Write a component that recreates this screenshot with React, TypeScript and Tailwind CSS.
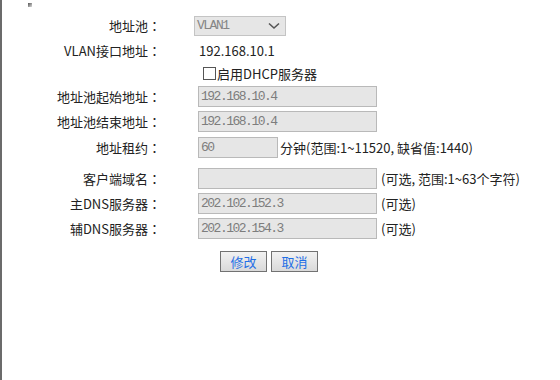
import React from "react";

const cjk = "font-['Noto_Sans_CJK_SC','Noto_Sans',sans-serif]";
const mono = "font-['Liberation_Mono','Noto_Sans_CJK_SC',monospace]";

interface FieldRow {
  label: string;
  value: string;
  width: string;
  hint?: string;
  hintGap: string;
  height: string;
}

const poolRows: FieldRow[] = [
  { label: "地址池起始地址", value: "192.168.10.4", width: "w-[179px]", hintGap: "", height: "h-[25px]" },
  { label: "地址池结束地址", value: "192.168.10.4", width: "w-[179px]", hintGap: "", height: "h-[25px]" },
  {
    label: "地址租约",
    value: "60",
    width: "w-[80px]",
    hint: "分钟(范围:1~11520, 缺省值:1440)",
    hintGap: "ml-[2px]",
    height: "h-[26px]",
  },
];

const optionRows: FieldRow[] = [
  { label: "客户端域名", value: "", width: "w-[179px]", hint: "(可选, 范围:1~63个字符)", hintGap: "ml-[4px]", height: "h-[25px]" },
  { label: "主DNS服务器", value: "202.102.152.3", width: "w-[179px]", hint: "(可选)", hintGap: "ml-[4px]", height: "h-[25px]" },
  { label: "辅DNS服务器", value: "202.102.154.3", width: "w-[179px]", hint: "(可选)", hintGap: "ml-[4px]", height: "h-[25px]" },
];

function Label({ text }: { text: string }) {
  return (
    <div className="w-[159px] shrink-0 text-right whitespace-nowrap">
      {text}
      <span className="font-['Noto_Sans_CJK_TC',sans-serif]">：</span>
    </div>
  );
}

function Field({ row }: { row: FieldRow }) {
  return (
    <div className={`flex items-center ${row.height}`}>
      <Label text={row.label} />
      <div className="flex items-center ml-[37px]">
        <div
          className={`${row.width} h-[21px] border border-[#b9b9b9] bg-[#e6e6e6] flex items-center pl-[2px] ${mono} text-[13px] tracking-[-1.5px] text-[#7d7d7d]`}
        >
          {row.value}
        </div>
        {row.hint && <span className={`${row.hintGap} whitespace-nowrap`}>{row.hint}</span>}
      </div>
    </div>
  );
}

function Button({ text }: { text: string }) {
  return (
    <button className="w-[47px] h-[21px] border border-[#727272] bg-gradient-to-b from-[#f2f2f2] to-[#d9d9d9] text-[#1f6fe6] text-[13px] leading-none">
      {text}
    </button>
  );
}

export default function App(): React.ReactElement {
  return (
    <div className={`w-[560px] h-[380px] bg-white border-l-2 border-[#6b6b6b] text-[13px] leading-none text-[#222] ${cjk}`}>
      <div className="h-[13px] pt-[3px] pl-[26px]">
        <div className="w-[4px] h-[4px] bg-gradient-to-br from-[#555] to-[#ddd]" />
      </div>

      <div className="flex items-center h-[25px]">
        <Label text="地址池" />
        <div className="ml-[33px] w-[92px] h-[20px] border border-[#c4c4c4] bg-[#e6e6e6] flex items-center justify-between pl-[2px] pr-[5px]">
          <span className={`${mono} text-[13px] tracking-[-1.5px] text-[#858585]`}>VLAN1</span>
          <svg width="12" height="8" viewBox="0 0 12 8">
            <path d="M1 1.5 L6 6 L11 1.5" fill="none" stroke="#555" strokeWidth="1.6" />
          </svg>
        </div>
      </div>

      <div className="flex items-center h-[24px]">
        <Label text="VLAN接口地址" />
        <span className="ml-[38px]">192.168.10.1</span>
      </div>

      <div className="flex items-center h-[22px]">
        <div className="w-[159px] shrink-0" />
        <div className="ml-[42px] flex items-center">
          <div className="w-[13px] h-[13px] border border-[#555] bg-white" />
          <span className="ml-[1px]">启用DHCP服务器</span>
        </div>
      </div>

      {poolRows.map((row) => (
        <Field key={row.label} row={row} />
      ))}

      <div className="h-[6px]" />

      {optionRows.map((row) => (
        <Field key={row.label} row={row} />
      ))}

      <div className="flex gap-[4px] pl-[218px] pt-[10px]">
        <Button text="修改" />
        <Button text="取消" />
      </div>
    </div>
  );
}
